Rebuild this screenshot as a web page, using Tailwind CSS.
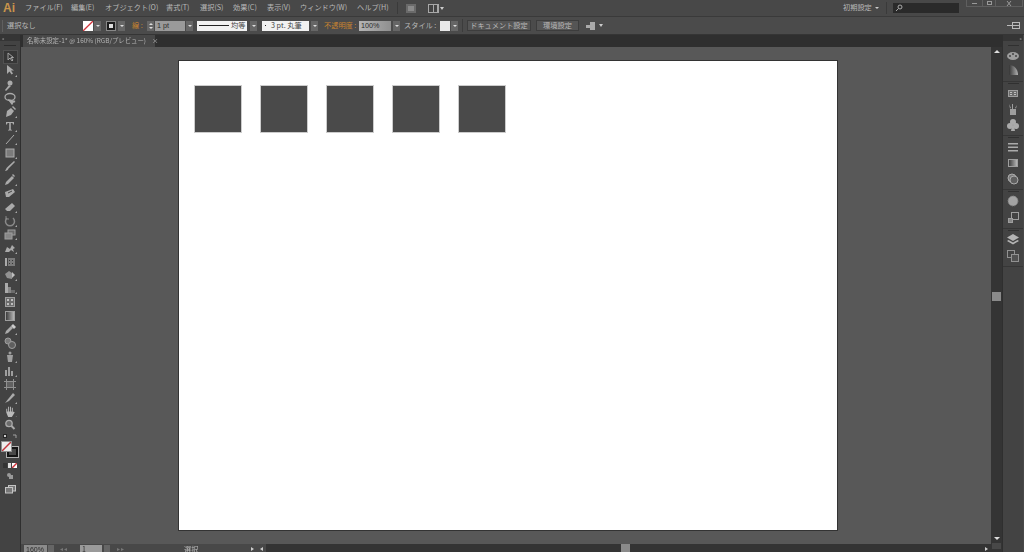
<!DOCTYPE html>
<html lang="ja">
<head>
<meta charset="UTF-8">
<title>Illustrator</title>
<script src="https://cdn.jsdelivr.net/npm/@tailwindcss/browser@4"></script>
</head>
<body class="w-[1024px] h-[552px] overflow-hidden bg-[#484848] font-['Noto_Sans_CJK_JP','Liberation_Sans',sans-serif] text-[7.2px] leading-none whitespace-nowrap text-[#b8b8b8]">
<div class="flex flex-col h-[552px] blur-[0.3px]">

  <!-- menu bar -->
  <div class="h-[17px] shrink-0 flex items-center bg-[#484848] border-b border-[#3a3a3a]">
    <span class="ml-[3px] w-[22px] font-['Liberation_Sans',sans-serif] font-bold text-[12px] text-[#c9954c]">Ai</span>
    <span class="w-[46px]">ファイル(F)</span>
    <span class="w-[34px]">編集(E)</span>
    <span class="w-[61px]">オブジェクト(O)</span>
    <span class="w-[34px]">書式(T)</span>
    <span class="w-[33px]">選択(S)</span>
    <span class="w-[34px]">効果(C)</span>
    <span class="w-[33px]">表示(V)</span>
    <span class="w-[57px]">ウィンドウ(W)</span>
    <span class="w-[40px]">ヘルプ(H)</span>
    <span class="w-px h-[12px] bg-[#3a3a3a]"></span>
    <span class="ml-[8px] w-[10px] h-[9px] bg-[#8a8a8a] border-2 border-[#6a6a6a]"></span>
    <span class="ml-[12px] w-[11px] h-[9px] bg-[#a8a8a8] flex gap-px p-px"><i class="w-[4px] bg-[#444]"></i><i class="w-[3px] bg-[#444]"></i></span>
    <span class="ml-[1px] w-0 h-0 border-x-[2px] border-x-transparent border-t-[3px] border-t-[#ccc]"></span>
    <span class="ml-auto w-[32px]">初期設定</span>
    <span class="w-0 h-0 border-x-[2px] border-x-transparent border-t-[2px] border-t-[#ccc]"></span>
    <span class="ml-[7px] w-px h-[12px] bg-[#3a3a3a]"></span>
    <span class="ml-[6px] w-[66px] h-[10px] bg-[#2a2a2a] flex items-center pl-[2px]">
      <svg width="8" height="8" viewBox="0 0 8 8" fill="none" stroke="#aaa"><circle cx="5" cy="3" r="2"/><path d="M3.500 4.500 1 7"/></svg>
    </span>
    <span class="ml-[7px] mr-[1px] self-start w-[57px] h-[7px] flex border border-t-0 border-[#5f5f5f]">
      <span class="w-[16px] flex items-center justify-center border-r border-[#5f5f5f]"><i class="w-[5px] h-px bg-[#999]"></i></span>
      <span class="w-[13px] flex items-center justify-center border-r border-[#5f5f5f]"><i class="w-[5px] h-[4px] border border-[#999]"></i></span>
      <span class="flex-1 flex items-center justify-center">
        <svg width="6" height="5" viewBox="0 0 6 5" stroke="#999"><path d="M1 0 5 5M5 0 1 5"/></svg>
      </span>
    </span>
  </div>

  <!-- control bar -->
  <div class="h-[18px] shrink-0 flex items-center bg-[#4b4b4b] border-b border-[#353535]">
    <span class="ml-[2px] w-px h-[12px] bg-[#5f5f5f]"></span>
    <span class="ml-[4px] w-[76px]">選択なし</span>
    <span class="w-[10px] h-[10px] bg-white relative overflow-hidden">
      <svg class="absolute inset-0" width="10" height="10" viewBox="0 0 10 10"><path d="M0 10 10 0" stroke="#d0343c" stroke-width="1.300"/></svg>
    </span>
    <span class="ml-[1px] w-[7px] h-[10px] bg-[#666] flex items-center justify-center"><i class="w-0 h-0 border-x-[2px] border-x-transparent border-t-[2px] border-t-[#ddd]"></i></span>
    <span class="ml-[5px] w-[10px] h-[10px] bg-[#1c1c1c] border border-[#888] flex items-center justify-center"><i class="w-[4px] h-[4px] bg-[#ddd]"></i></span>
    <span class="ml-[2px] w-[7px] h-[10px] bg-[#666] flex items-center justify-center"><i class="w-0 h-0 border-x-[2px] border-x-transparent border-t-[2px] border-t-[#ddd]"></i></span>
    <span class="ml-[7px] w-[15px] text-[#c9832f]">線 :</span>
    <span class="w-[7px] h-[10px] bg-[#666] flex flex-col items-center justify-center gap-[2px]"><i class="w-0 h-0 border-x-[2px] border-x-transparent border-b-[2px] border-b-[#ddd]"></i><i class="w-0 h-0 border-x-[2px] border-x-transparent border-t-[2px] border-t-[#ddd]"></i></span>
    <span class="ml-[1px] w-[30px] h-[10px] bg-[#9a9a9a] text-[#2c2c2c] pl-[2px] flex items-center font-['Liberation_Sans',sans-serif]">1 pt</span>
    <span class="ml-[1px] w-[7px] h-[10px] bg-[#666] flex items-center justify-center"><i class="w-0 h-0 border-x-[2px] border-x-transparent border-t-[2px] border-t-[#ddd]"></i></span>
    <span class="ml-[4px] w-[50px] h-[10px] bg-[#f1f1f1] text-[#444] flex items-center pl-[2px] gap-[2px]"><i class="w-[30px] h-px bg-[#222]"></i>均等</span>
    <span class="ml-[3px] w-[7px] h-[10px] bg-[#666] flex items-center justify-center"><i class="w-0 h-0 border-x-[2px] border-x-transparent border-t-[2px] border-t-[#ddd]"></i></span>
    <span class="ml-[5px] w-[47px] h-[10px] bg-[#f1f1f1] text-[#444] flex items-center pl-[3px] gap-[5px]"><i class="w-px h-px bg-[#222]"></i>3 pt. 丸筆</span>
    <span class="ml-[2px] w-[7px] h-[10px] bg-[#666] flex items-center justify-center"><i class="w-0 h-0 border-x-[2px] border-x-transparent border-t-[2px] border-t-[#ddd]"></i></span>
    <span class="ml-[6px] w-[35px] text-[#c9832f]">不透明度 :</span>
    <span class="w-[32px] h-[10px] bg-gradient-to-r from-[#b5b5b5] to-[#8f8f8f] text-[#2c2c2c] pl-[2px] flex items-center font-['Liberation_Sans',sans-serif]">100%</span>
    <span class="ml-[2px] w-[7px] h-[10px] bg-[#666] flex items-center justify-center"><i class="w-0 h-0 border-x-[2px] border-x-transparent border-t-[2px] border-t-[#ddd]"></i></span>
    <span class="ml-[4px] w-[36px]">スタイル :</span>
    <span class="w-[10px] h-[10px] bg-[#e8e8e8]"></span>
    <span class="ml-[1px] w-[7px] h-[10px] bg-[#666] flex items-center justify-center"><i class="w-0 h-0 border-x-[2px] border-x-transparent border-t-[2px] border-t-[#ddd]"></i></span>
    <span class="ml-[4px] w-px h-[13px] bg-[#3c3c3c]"></span>
    <span class="ml-[4px] w-[64px] h-[11px] bg-[#555] border border-[#3d3d3d] flex items-center justify-center">ドキュメント設定</span>
    <span class="ml-[5px] w-[43px] h-[11px] bg-[#555] border border-[#3d3d3d] flex items-center justify-center">環境設定</span>
    <svg class="ml-[7px]" width="10" height="8" viewBox="0 0 10 8" fill="#aaa"><rect x="0" y="3" width="4" height="3"/><rect x="4" y="0" width="5" height="8"/></svg>
    <span class="ml-[3px] w-0 h-0 border-x-[2px] border-x-transparent border-t-[3px] border-t-[#ccc]"></span>
    <svg class="ml-auto mr-[4px]" width="13" height="7" viewBox="0 0 13 7" fill="none" stroke="#bbb"><path d="M0 3.500h5"/><rect x="5.500" y=".5" width="7" height="6"/><path d="M6 3.500h6"/></svg>
  </div>

  <div class="flex-1 min-h-0 flex">

    <!-- tools panel -->
    <div class="w-[21px] shrink-0 bg-[#434343] border-r border-[#2f2f2f] flex flex-col">
      <div class="h-[6px] bg-[#353535] pl-[2px] text-[5px] text-[#aaa]">»</div>
      <div class="mx-[4px] mt-[4px] h-px bg-[#2c2c2c]"></div>
      <div class="mt-[4px] flex flex-col items-center opacity-80">
        <span class="w-[15px] h-[14px] bg-[#333] border border-[#555] flex items-center justify-center">
          <svg width="9" height="10" viewBox="0 0 9 10" fill="none" stroke="#bbb"><path d="M2 1v7l2-2 2 3 1-1-2-2.500h2.500z"/></svg>
        </span>
        <svg width="14" height="14" viewBox="0 0 14 14" fill="#c4c4c4"><path d="M4 1v9l2.500-2.500 2 3 1.500-1-2-3h3z"/><path d="M14 13h-2l2-2z"/></svg>
        <svg width="14" height="14" viewBox="0 0 14 14" fill="#c4c4c4"><path d="M6 7 2 12l1 1 5-5z"/><circle cx="7" cy="5" r="2.500"/></svg>
        <svg width="14" height="13" viewBox="0 0 14 13" fill="none" stroke="#c4c4c4" stroke-width="1.300"><ellipse cx="7" cy="5" rx="5" ry="3.500"/><path d="M6 8l3 4 1-2 2-.5z" fill="#c4c4c4"/></svg>
        <svg width="14" height="14" viewBox="0 0 14 14" fill="#c4c4c4"><path d="M3 12 4 6l4-3 3 3-3 4z"/><path d="M9 2l1-1 3 3-1 1z"/><path d="M14 13h-2l2-2z"/></svg>
        <svg width="14" height="14" viewBox="0 0 14 14" fill="#c4c4c4"><path d="M3 3h8v2.500h-1L9.500 4H7.800v6.500l1.200.4v.6H5v-.6l1.200-.4V4H4.500L4 5.500H3z"/><path d="M14 13h-2l2-2z"/></svg>
        <svg width="14" height="13" viewBox="0 0 14 13" fill="#c4c4c4"><path d="M3 11 11 2" stroke="#c4c4c4"/><path d="M14 12h-2l2-2z"/></svg>
        <svg width="14" height="14" viewBox="0 0 14 14" fill="#8a8a8a"><rect x="3" y="3" width="8" height="8" stroke="#c4c4c4"/><path d="M14 13h-2l2-2z" fill="#c4c4c4"/></svg>
        <svg width="14" height="13" viewBox="0 0 14 13" fill="#c4c4c4"><path d="M2 11c2 0 3-1 3.500-2.500L12 2l-1-1-6.500 6C3 8 3 10 2 11z"/></svg>
        <svg width="14" height="14" viewBox="0 0 14 14" fill="#c4c4c4"><path d="M2 12l1-3 6-6 2 2-6 6z"/><path d="M9 2l1-1 2 2-1 1z"/><path d="M14 13h-2l2-2z"/></svg>
        <svg width="14" height="13" viewBox="0 0 14 13" fill="#c4c4c4"><path d="M2 5l8-3 2 3-6 5H3z"/><path d="M5 6l4-2" stroke="#444"/></svg>
        <svg width="14" height="14" viewBox="0 0 14 14" fill="#c4c4c4"><path d="M2 9 9 3l3 3-5 5H4z"/><path d="M14 13h-2l2-2z"/></svg>
        <svg width="14" height="14" viewBox="0 0 14 14" fill="none" stroke="#9a9a9a" stroke-width="1.500"><path d="M4 4a4.500 4.500 0 1 0 6 0"/><path d="M3 2v3h3" stroke-width="1"/><path d="M14 13h-2l2-2z" fill="#c4c4c4" stroke="none"/></svg>
        <svg width="14" height="13" viewBox="0 0 14 13" fill="#777" stroke="#b5b5b5"><rect x="5" y="2" width="7" height="5"/><rect x="2" y="5" width="7" height="6" fill="#999"/><path d="M14 12h-2l2-2z" fill="#c4c4c4" stroke="none"/></svg>
        <svg width="14" height="14" viewBox="0 0 14 14" fill="#c4c4c4"><path d="M2 11l2-5 3 2 2-4 3 3-2 1 1 3-3-2-2 2z"/><path d="M14 13h-2l2-2z"/></svg>
        <svg width="14" height="13" viewBox="0 0 14 13" fill="#c4c4c4"><rect x="2" y="3" width="2" height="8"/><rect x="5" y="3" width="7" height="8" fill="#888"/><path d="M6 5h1v1H6zM9 5h1v1H9zM6 8h1v1H6zM9 8h1v1H9z" fill="#333"/></svg>
        <svg width="14" height="14" viewBox="0 0 14 14" fill="#a5a5a5"><path d="M2 6l4-3 3 2v6L4 10z"/><path d="M9 4l3 3-3 3z" fill="#ddd"/><path d="M14 13h-2l2-2z" fill="#c4c4c4"/></svg>
        <svg width="14" height="13" viewBox="0 0 14 13" fill="#c4c4c4"><path d="M2 1h3v10H2z"/><path d="M5 5h3v6H5z" fill="#999"/><path d="M8 8h4v3H8z" fill="#777"/><path d="M14 12h-2l2-2z"/></svg>
        <svg width="14" height="14" viewBox="0 0 14 14" fill="#777" stroke="#b5b5b5"><rect x="2.500" y="2.500" width="9" height="9"/><path d="M4 4h2v2H4zM8 4h2v2H8zM4 8h2v2H4zM8 8h2v2H8z" fill="#ddd" stroke="none"/></svg>
        <svg width="14" height="14" viewBox="0 0 14 14"><defs><linearGradient id="g"><stop stop-color="#333"/><stop offset="1" stop-color="#ddd"/></linearGradient></defs><rect x="2.500" y="2.500" width="9" height="9" fill="url(#g)" stroke="#b5b5b5"/></svg>
        <svg width="14" height="13" viewBox="0 0 14 13" fill="#c4c4c4"><path d="M2 11l1-3 5-5 2 2-5 5z"/><path d="M8 3l2-2 3 3-2 2z" fill="#eee"/><path d="M14 12h-2l2-2z"/></svg>
        <svg width="14" height="14" viewBox="0 0 14 14" fill="#888" stroke="#b5b5b5"><circle cx="5" cy="5" r="3"/><circle cx="9" cy="9" r="3.500" fill="#666"/></svg>
        <svg width="14" height="14" viewBox="0 0 14 14" fill="#b5b5b5"><path d="M4 5h6l-1 7H5z"/><circle cx="7" cy="3" r="1.500"/><path d="M14 13h-2l2-2z"/></svg>
        <svg width="14" height="14" viewBox="0 0 14 14" fill="#b5b5b5"><rect x="2" y="6" width="2" height="6"/><rect x="5" y="3" width="2" height="9"/><rect x="8" y="7" width="2" height="5"/><path d="M14 13h-2l2-2z"/></svg>
        <svg width="14" height="13" viewBox="0 0 14 13" fill="none" stroke="#a5a5a5"><rect x="3.500" y="3.500" width="7" height="6" fill="#6a6a6a"/><path d="M3.500 1v11M10.500 1v11M1 3.500h12M1 9.500h12"/></svg>
        <svg width="14" height="14" viewBox="0 0 14 14" fill="#c4c4c4"><path d="M2 12 10 2l2 2-6 6z"/><path d="M14 13h-2l2-2z"/></svg>
        <svg width="14" height="13" viewBox="0 0 14 14" fill="#d8d8d8"><path d="M3 8V4h1v3h1V2h1v5h1V2h1v5h1V3h1v5l1-1 1 1-3 5H5z"/><path d="M14 13h-1l1-1z"/></svg>
        <svg width="14" height="13" viewBox="0 0 14 13" fill="none" stroke="#c4c4c4" stroke-width="1.300"><circle cx="6" cy="5.500" r="3.200" fill="#777"/><path d="M8.500 8l3 3" stroke-width="2"/></svg>
      </div>
      <!-- colour controls -->
      <div class="relative mt-[3px] h-[26px] opacity-90">
        <span class="absolute left-[3px] top-0 w-[4px] h-[4px] bg-[#ddd] border border-[#222]"></span>
        <svg class="absolute left-[12px] top-0" width="6" height="6" viewBox="0 0 6 6" fill="none" stroke="#aaa"><path d="M1 1h3v3"/></svg>
        <span class="absolute left-[7px] top-[13px] w-[11px] h-[10px] bg-[#4a4a4a] border-2 border-[#111] outline outline-1 outline-[#bbb]"></span>
        <span class="absolute left-[1px] top-[7px] w-[11px] h-[11px] bg-white border border-[#999] overflow-hidden">
          <svg width="9" height="9" viewBox="0 0 9 9"><path d="M0 9 9 0" stroke="#d0343c" stroke-width="1.500"/></svg>
        </span>
      </div>
      <div class="mt-[3px] flex justify-center gap-[1px]">
        <i class="w-[4px] h-[5px] bg-[#333]"></i><i class="w-[3px] h-[5px] bg-[#ddd]"></i>
        <span class="w-[5px] h-[5px] bg-white overflow-hidden"><svg width="5" height="5" viewBox="0 0 5 5"><path d="M0 5 5 0" stroke="#d0343c" stroke-width="1.500"/></svg></span>
      </div>
      <svg class="mt-[4px] mx-auto" width="8" height="8" viewBox="0 0 8 8" fill="#999"><circle cx="3" cy="3" r="2"/><rect x="3" y="3" width="4" height="4"/></svg>
      <svg class="mt-[5px] mx-auto" width="11" height="9" viewBox="0 0 11 9" fill="#777" stroke="#c4c4c4"><rect x="3.500" y=".5" width="7" height="5.500"/><rect x=".5" y="2.500" width="7" height="5.500"/></svg>
    </div>

    <!-- document area -->
    <div class="w-[981px] shrink-0 flex flex-col">
      <div class="h-[12px] shrink-0 bg-[#2f2f2f] flex">
        <span class="ml-[2px] w-[132px] h-[12px] bg-[#484848] text-[#b5b5b5] text-[6.4px] flex items-center pl-[4px] gap-[6px]">名称未設定-1* @ 160% (RGB/プレビュー)<i class="not-italic">×</i></span>
      </div>
      <div class="flex-1 min-h-0 flex">
        <div class="w-[970px] shrink-0 flex flex-col">
          <div class="h-[497px] shrink-0 bg-[#585858] pl-[157px] pt-[13px]">
            <div class="w-[660px] h-[471px] bg-white border border-[#333] pl-[15px] pt-[24px] flex gap-[18.500px] items-start">
              <div class="w-[47.500px] h-[48px] bg-[#4a4a4a] border border-[#ccc]"></div>
              <div class="w-[47.500px] h-[48px] bg-[#4a4a4a] border border-[#ccc]"></div>
              <div class="w-[47.500px] h-[48px] bg-[#4a4a4a] border border-[#ccc]"></div>
              <div class="w-[47.500px] h-[48px] bg-[#4a4a4a] border border-[#ccc]"></div>
              <div class="w-[47.500px] h-[48px] bg-[#4a4a4a] border border-[#ccc]"></div>
            </div>
          </div>
          <!-- status bar -->
          <div class="flex-1 bg-[#484848] flex items-start">
            <span class="ml-[3px] mt-[1px] w-[23px] h-[8px] bg-[#8c8c8c] text-[#2c2c2c] pl-[2px] flex items-center font-['Liberation_Sans',sans-serif] text-[7px]">160%</span>
            <span class="ml-[1px] mt-[1px] w-[6px] h-[8px] bg-[#666]"></span>
            <span class="ml-[6px] mt-[2px] w-[20px] text-[#777] text-[6px]">◂ ◂</span>
            <span class="mt-[1px] w-[22px] h-[8px] bg-[#9a9a9a] text-[#2c2c2c] pl-[2px] text-[7px] flex items-center">1</span>
            <span class="ml-[2px] mt-[1px] w-[6px] h-[8px] bg-[#666]"></span>
            <span class="ml-[7px] mt-[2px] w-[67px] text-[#777] text-[6px]">▸ ▸</span>
            <span class="mt-[2px] w-[67px]">選択</span>
            <span class="mt-[3px] w-0 h-0 border-y-[2px] border-y-transparent border-l-[3px] border-l-[#ccc]"></span>
            <span class="ml-[6px] mt-[3px] w-0 h-0 border-y-[2px] border-y-transparent border-r-[3px] border-r-[#ccc]"></span>
            <div class="ml-[3px] flex-1 h-full bg-[#343434] flex items-center">
              <span class="ml-[355px] w-[9px] h-full bg-[#8a8a8a]"></span>
              <span class="ml-auto mr-[3px] w-0 h-0 border-y-[2px] border-y-transparent border-l-[3px] border-l-[#ccc]"></span>
            </div>
          </div>
        </div>
        <!-- vertical scrollbar -->
        <div class="w-[11px] shrink-0 bg-[#343434] flex flex-col items-center pt-[3px]">
          <i class="w-0 h-0 border-x-[3px] border-x-transparent border-b-[3px] border-b-[#ddd]"></i>
          <span class="mt-[239px] w-[9px] h-[9px] bg-[#8a8a8a]"></span>
          <i class="mt-[236px] w-0 h-0 border-x-[3px] border-x-transparent border-t-[3px] border-t-[#ddd]"></i>
          <span class="mt-[3px] w-[9px] h-[6px] bg-[#484848]"></span>
        </div>
      </div>
    </div>

    <!-- right dock -->
    <div class="w-[21px] shrink-0 bg-[#434343] border-l border-[#2f2f2f] flex flex-col items-center">
      <div class="h-[6px] w-full bg-[#353535] text-right pr-[1px] text-[5px] text-[#aaa]">«</div>
      <div class="w-full flex flex-col items-center border-b border-[#333] pb-[4px] opacity-80">
        <i class="mt-[4px] w-[11px] h-px bg-[#2c2c2c]"></i>
        <svg class="mt-[2px]" width="14" height="14" viewBox="0 0 14 14" fill="#b5b5b5"><ellipse cx="7" cy="8" rx="6" ry="4"/><circle cx="4" cy="8" r="1" fill="#444"/><circle cx="7" cy="6" r="1" fill="#444"/><circle cx="10" cy="8" r="1" fill="#444"/></svg>
        <svg class="mt-[1px]" width="14" height="14" viewBox="0 0 14 14"><defs><linearGradient id="h"><stop stop-color="#333"/><stop offset="1" stop-color="#ccc"/></linearGradient></defs><path d="M3 2c5 0 9 4 9 10H3z" fill="url(#h)"/></svg>
      </div>
      <div class="w-full flex flex-col items-center border-b border-[#333] pb-[3px] opacity-80">
        <i class="mt-[1px] w-[11px] h-px bg-[#2c2c2c]"></i>
        <svg class="mt-[2px]" width="14" height="14" viewBox="0 0 14 14" fill="#777" stroke="#b5b5b5"><rect x="2.500" y="4.500" width="9" height="6"/><path d="M4 6h2v1H4zM8 6h2v1H8zM4 8h2v1H4zM8 8h2v1H8z" fill="#ddd" stroke="none"/></svg>
        <svg class="mt-[2px]" width="14" height="14" viewBox="0 0 14 14" fill="#b5b5b5"><path d="M4 7h6v6H4z"/><path d="M6 7V2h1v5zM3 2l2 4-1 .5zM11 3 9 6l1 .5z"/></svg>
        <svg class="mt-[2px]" width="14" height="14" viewBox="0 0 14 14" fill="#c4c4c4"><circle cx="7" cy="4" r="3"/><circle cx="4" cy="8" r="3"/><circle cx="10" cy="8" r="3"/><path d="M6 8h2l1 5H5z"/></svg>
      </div>
      <div class="w-full flex flex-col items-center border-b border-[#333] pb-[3px] opacity-80">
        <i class="mt-[1px] w-[11px] h-px bg-[#2c2c2c]"></i>
        <svg class="mt-[2px]" width="14" height="14" viewBox="0 0 14 14" fill="#c4c4c4"><rect x="2" y="3" width="10" height="1.500"/><rect x="2" y="6.500" width="10" height="1.500"/><rect x="2" y="10" width="10" height="1.500"/></svg>
        <svg class="mt-[2px]" width="14" height="14" viewBox="0 0 14 14"><defs><linearGradient id="j"><stop stop-color="#333"/><stop offset="1" stop-color="#ddd"/></linearGradient></defs><rect x="2.500" y="3.500" width="9" height="7" fill="url(#j)" stroke="#b5b5b5"/></svg>
        <svg class="mt-[2px]" width="14" height="14" viewBox="0 0 14 14" fill="#8a8a8a" stroke="#c4c4c4"><circle cx="6" cy="6" r="4"/><circle cx="8" cy="8" r="4" fill="#666"/></svg>
      </div>
      <div class="w-full flex flex-col items-center border-b border-[#333] pb-[4px] opacity-80">
        <i class="mt-[1px] w-[11px] h-px bg-[#2c2c2c]"></i>
        <svg class="mt-[2px]" width="14" height="14" viewBox="0 0 14 14" fill="#bbb" stroke="#8a8a8a" stroke-dasharray="1.500 1"><circle cx="7" cy="7" r="5"/></svg>
        <svg class="mt-[2px]" width="14" height="14" viewBox="0 0 14 14" fill="none" stroke="#b5b5b5"><rect x="5.500" y="2.500" width="7" height="7"/><rect x="2.500" y="8.500" width="4" height="4" fill="#999"/></svg>
      </div>
      <div class="w-full flex flex-col items-center border-b border-[#333] pb-[3px] opacity-80">
        <i class="mt-[1px] w-[11px] h-px bg-[#2c2c2c]"></i>
        <svg class="mt-[2px]" width="14" height="14" viewBox="0 0 14 14" fill="#d0d0d0"><path d="M7 1l6 3.500L7 8 1 4.500z"/><path d="M2.500 7 7 9.500 11.500 7 13 8l-6 3.500L1 8z"/></svg>
        <svg class="mt-[2px]" width="14" height="14" viewBox="0 0 14 14" fill="none" stroke="#a5a5a5"><rect x="1.500" y="1.500" width="7" height="7"/><rect x="5.500" y="5.500" width="7" height="7" fill="#555"/></svg>
      </div>
    </div>

  </div>
</div>
</body>
</html>
